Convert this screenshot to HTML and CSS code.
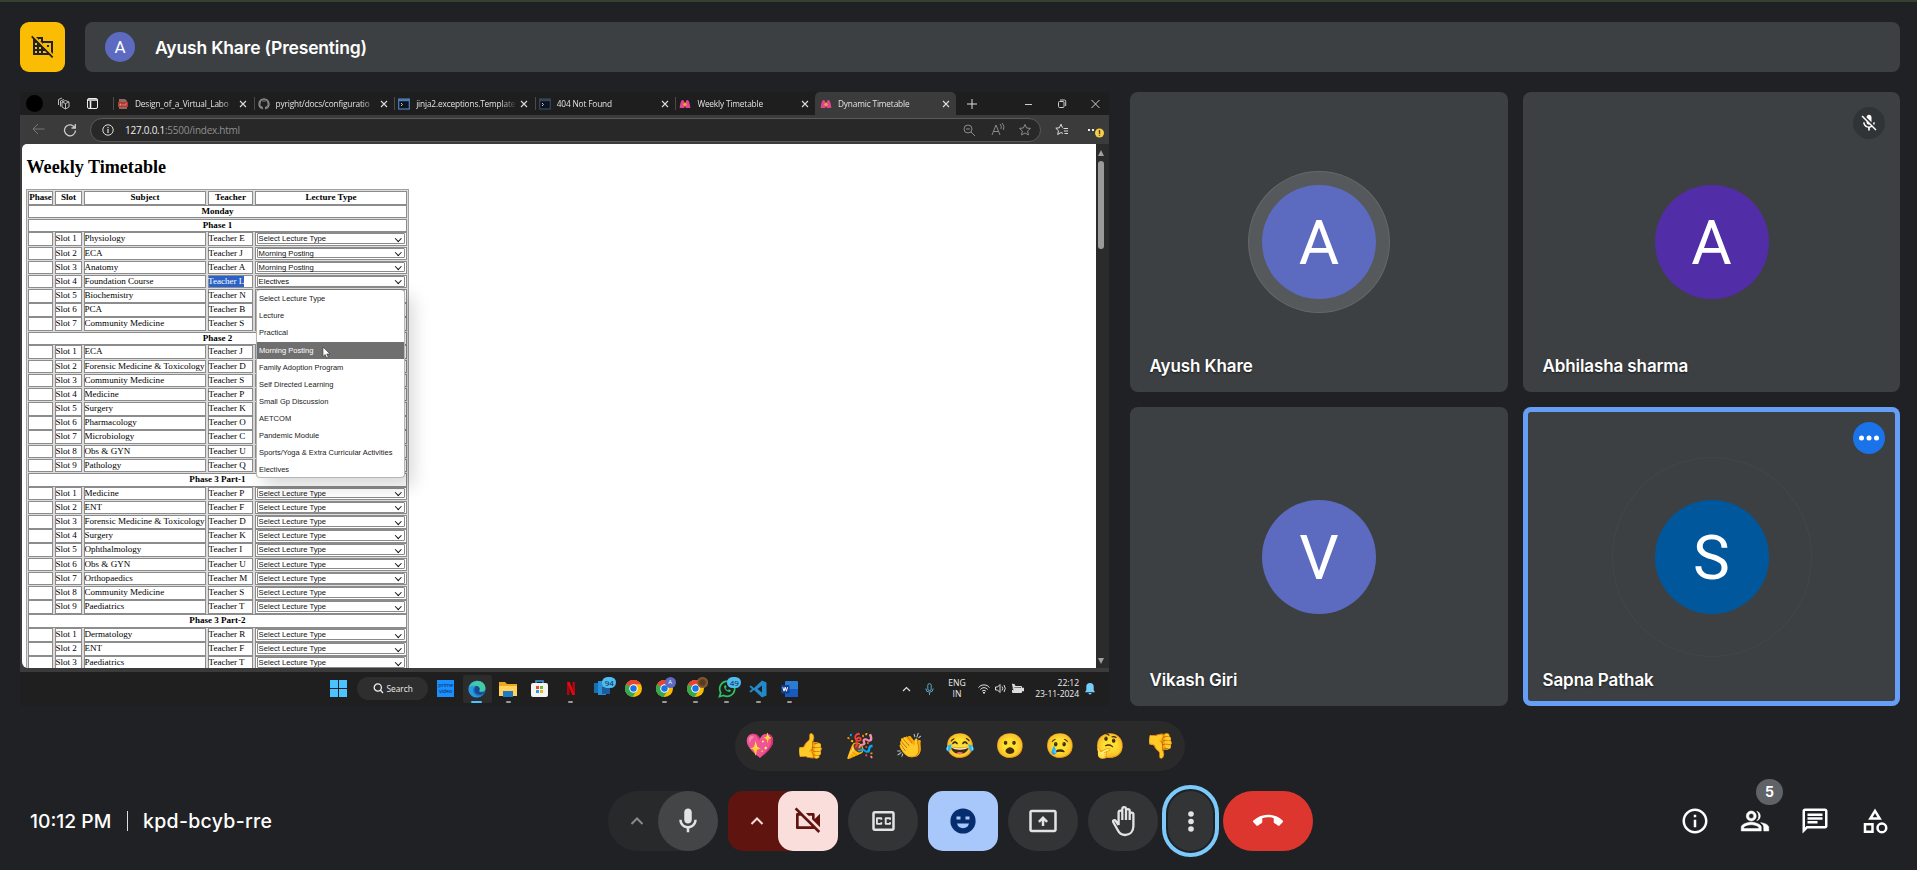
FILE: index.html
```html
<!DOCTYPE html>
<html lang="en">
<head>
<meta charset="utf-8">
<title>Meet - kpd-bcyb-rre</title>
<link rel="stylesheet" href="styles.css">
</head>
<body>
<svg class="defs" width="0" height="0">
  <symbol id="i-chrome" viewBox="0 0 20 20"><circle cx="10" cy="10" r="10" fill="#fbbc04"/><path d="M10 10L1.3 5A10 10 0 0 1 18.7 5H10z" fill="#ea4335"/><path d="M10 10L1.3 5a10 10 0 0 0 7.6 14.9L14 12z" fill="#34a853"/><circle cx="10" cy="10" r="5" fill="#fff"/><circle cx="10" cy="10" r="3.8" fill="#1a73e8"/></symbol>
  <symbol id="i-x" viewBox="0 0 8 8"><path d="M1 1l6 6M7 1L1 7" stroke="#ddd" stroke-width="1.1"/></symbol>
  <symbol id="i-fly" viewBox="0 0 12 10"><path d="M5.300 9H1.200C.3 9 .8 7.500 1 6.500 1.500 4 2 1 3.800 1 5 1 5.300 3 5.500 5zM6.700 9h4.100c.9 0 .4-1.500.2-2.500C10.500 4 10 1 8.200 1 7 1 6.700 3 6.500 5z" fill="#e0468f"/><path d="M6 3L4 5.500 6 8l2-2.500z" fill="#f39a3a"/></symbol>
  <symbol id="i-term" viewBox="0 0 12 12"><rect x=".7" y="1" width="10.600" height="10" fill="#10141c" stroke="currentColor" stroke-width="1.200"/><path d="M.5 2.200h11" stroke="currentColor" stroke-width="2"/><path d="M3 5l1.500 1.500L3 8" stroke="#ccc" fill="none"/></symbol>
  <symbol id="i-up" viewBox="0 0 14 14"><path d="M1.500 10L7 4.500 12.500 10" fill="none" stroke="currentColor" stroke-width="2"/></symbol>
</svg>

<header class="top">
  <button class="domain"><svg width="24" height="24" viewBox="0 0 24 24" fill="#202124"><path fill-rule="evenodd" d="M8 5h2v2h-.9L12 9.900V9h8v8.900l2 2V7H12V3H5.100L8 5.900V5zm8 6h2v2h-2v-2zM1.300 1.800L.1 3.100 2 5v16h16l3 3 1.300-1.300-21-20.900zM4 17h2v2H4v-2zm2-2H4v-2h2v2zM4 9h2v2H4V9zm6 10H8v-2h2v2zm-2-4v-2h2v2H8zm4 4v-2h2l2 2h-4z"/></svg></button>
  <div class="presenter"><span class="mini">A</span><span class="ptext">Ayush Khare (Presenting)</span></div>
</header>

<main class="stage">
  <section class="share">
    <div class="tabs">
      <div class="tabtools">
        <span class="blob"></span>
        <svg width="13" height="13" viewBox="0 0 13 13" fill="none" stroke="#bbb"><path d="M5 5l3.500-1.500L12 5v5l-3.500 2L5 10zM5 5l3.500 1.500L12 5M8.500 6.500V12M3.500 9.500V4L7 2.500M1.500 8V2.500L5 1"/></svg>
        <svg width="11" height="11" viewBox="0 0 11 11" fill="none" stroke="#eee"><rect x=".5" y=".5" width="10" height="10" rx="1.500"/><path d="M.5 2h10M3.500 3v7" stroke-width="1.600"/></svg>
      </div>
      <div class="tab"><svg width="12" height="12" viewBox="0 0 12 12"><path d="M2 1h6l2 2v8H2z" fill="#8d6a66"/><path d="M1 4h10v5H1z" fill="#b3392f"/><path d="M3 7h1V6H3v2M6 6v2M8 8V6h2" stroke="#eaa" stroke-width=".6" fill="none"/></svg><span class="tt">Design_of_a_Virtual_Labo</span><svg class="x"><use href="#i-x"/></svg></div>
      <div class="tab"><svg width="12" height="12" viewBox="0 0 12 12"><path d="M4.500 11.200V9.500C3 9.800 2.500 9 2 8.300M7.500 11.200V9c2-.4 3-1.400 2.400-4L9.500 2 7.600 3H4.400L2.500 2 2.200 5c-.6 2 .3 3.500 2.300 4" fill="none" stroke="#888"/><circle cx="6" cy="6" r="5" fill="none" stroke="#888" stroke-width="1.400" stroke-dasharray="27 4.400" stroke-dashoffset="-10"/></svg><span class="tt">pyright/docs/configuratio</span><svg class="x"><use href="#i-x"/></svg></div>
      <div class="tab"><svg class="term" width="12" height="12"><use href="#i-term"/></svg><span class="tt">jinja2.exceptions.Template</span><svg class="x"><use href="#i-x"/></svg></div>
      <div class="tab"><svg class="term dim" width="12" height="12"><use href="#i-term"/></svg><span class="tt">404 Not Found</span><svg class="x"><use href="#i-x"/></svg></div>
      <div class="tab"><svg width="12" height="10"><use href="#i-fly"/></svg><span class="tt">Weekly Timetable</span><svg class="x"><use href="#i-x"/></svg></div>
      <div class="tab on"><svg width="12" height="10"><use href="#i-fly"/></svg><span class="tt">Dynamic Timetable</span><svg class="x"><use href="#i-x"/></svg></div>
      <svg class="plus" width="10" height="10" viewBox="0 0 10 10" stroke="#ddd"><path d="M5 0v10M0 5h10"/></svg>
      <svg class="win" width="76" height="10" viewBox="0 0 76 10" fill="none" stroke="#ccc"><path d="M1 5.500h7M67.500 1l8 8M75.500 1l-8 8"/><rect x="34.500" y="2.500" width="5.500" height="6" rx="1"/><path d="M36 1h4.500a1.200 1.200 0 0 1 1.200 1.200V7"/></svg>
    </div>
    <div class="bar">
      <svg class="back" width="13" height="12" viewBox="0 0 13 12" fill="none" stroke="#777"><path d="M12.500 6H1M6 1L1 6l5 5"/></svg>
      <svg class="reload" width="14" height="14" viewBox="0 0 14 14" fill="none" stroke="#ccc" stroke-width="1.300"><path d="M12 5A5.500 5.500 0 1 0 12.500 7.500M12.300 1v4H8.500"/></svg>
      <div class="omni">
        <svg width="12" height="12" viewBox="0 0 12 12" fill="none" stroke="#ddd"><circle cx="6" cy="6" r="5.200"/><path d="M6 5v4M6 3v1.200" stroke-width="1.200"/></svg>
        <span class="url"><em>127.0.0.1</em>:5500/index.html</span>
        <svg class="omr" width="70" height="14" viewBox="0 0 70 14" fill="none" stroke="#8a8a8a"><circle cx="6" cy="6" r="4"/><path d="M9 9l4 4M4 6h4M30 12l4-10 4 10M31.500 8.500h5M38 1q2 2 1 5M40 0q3 3 1.500 7M63 1.500l1.600 3.500 3.900.4-2.900 2.600.9 3.900L63 10l-3.500 1.900.9-3.900-2.900-2.600 3.900-.4z"/></svg>
      </div>
      <svg class="fav" width="14" height="13" viewBox="0 0 14 13" fill="none" stroke="#ddd"><path d="M8 10.500L6 9.500l-3.300 2 .8-3.700L.8 5.200l3.500-.4L6 1.200l1.500 3.500M8.500 5.500H13M9 8h4M9.500 10.500H13"/></svg>
      <svg class="dots" width="18" height="14" viewBox="0 0 18 14"><path d="M1 5h2v2H1zM5 5h2v2H5z" fill="#eee"/><circle cx="12.500" cy="9" r="4.500" fill="#f5cf4a"/><path d="M12.500 6v4M12.500 10.800v1" stroke="#5c4500" stroke-width="1.400"/></svg>
    </div>
    <div class="view">
      <div class="page">
        <h1>Weekly Timetable</h1>
        <div class="tbl">
          <div class="r hd"><b>Phase</b><b>Slot</b><b>Subject</b><b>Teacher</b><b>Lecture Type</b></div>
          <div class="r full"><b>Monday</b></div>
          <div class="r full"><b>Phase 1</b></div>
          <div class="r"><i></i><i>Slot 1</i><i>Physiology</i><i>Teacher E</i><i><s>Select Lecture Type</s></i></div>
          <div class="r"><i></i><i>Slot 2</i><i>ECA</i><i>Teacher J</i><i><s>Morning Posting</s></i></div>
          <div class="r"><i></i><i>Slot 3</i><i>Anatomy</i><i>Teacher A</i><i><s>Morning Posting</s></i></div>
          <div class="r"><i></i><i>Slot 4</i><i>Foundation Course</i><i><mark>Teacher L</mark></i><i class="anchor"><s>Electives</s>
            <div class="menu">
              <span>Select Lecture Type</span><span>Lecture</span><span>Practical</span><span class="hot">Morning Posting<svg class="cursor" width="9" height="13" viewBox="0 0 9 13"><path d="M1 1v9.500l2.200-2 1.500 3.500 1.600-.7L4.800 8H8z" fill="#fff" stroke="#333" stroke-width=".6"/></svg></span><span>Family Adoption Program</span><span>Self Directed Learning</span><span>Small Gp Discussion</span><span>AETCOM</span><span>Pandemic Module</span><span>Sports/Yoga &amp; Extra Curricular Activities</span><span>Electives</span>
            </div></i></div>
          <div class="r"><i></i><i>Slot 5</i><i>Biochemistry</i><i>Teacher N</i><i><s></s></i></div>
          <div class="r"><i></i><i>Slot 6</i><i>PCA</i><i>Teacher B</i><i><s></s></i></div>
          <div class="r"><i></i><i>Slot 7</i><i>Community Medicine</i><i>Teacher S</i><i><s></s></i></div>
          <div class="r full"><b>Phase 2</b></div>
          <div class="r"><i></i><i>Slot 1</i><i>ECA</i><i>Teacher J</i><i><s></s></i></div>
          <div class="r"><i></i><i>Slot 2</i><i>Forensic Medicine &amp; Toxicology</i><i>Teacher D</i><i><s></s></i></div>
          <div class="r"><i></i><i>Slot 3</i><i>Community Medicine</i><i>Teacher S</i><i><s></s></i></div>
          <div class="r"><i></i><i>Slot 4</i><i>Medicine</i><i>Teacher P</i><i><s></s></i></div>
          <div class="r"><i></i><i>Slot 5</i><i>Surgery</i><i>Teacher K</i><i><s></s></i></div>
          <div class="r"><i></i><i>Slot 6</i><i>Pharmacology</i><i>Teacher O</i><i><s></s></i></div>
          <div class="r"><i></i><i>Slot 7</i><i>Microbiology</i><i>Teacher C</i><i><s></s></i></div>
          <div class="r"><i></i><i>Slot 8</i><i>Obs &amp; GYN</i><i>Teacher U</i><i><s></s></i></div>
          <div class="r"><i></i><i>Slot 9</i><i>Pathology</i><i>Teacher Q</i><i><s></s></i></div>
          <div class="r full"><b>Phase 3 Part-1</b></div>
          <div class="r"><i></i><i>Slot 1</i><i>Medicine</i><i>Teacher P</i><i><s>Select Lecture Type</s></i></div>
          <div class="r"><i></i><i>Slot 2</i><i>ENT</i><i>Teacher F</i><i><s>Select Lecture Type</s></i></div>
          <div class="r"><i></i><i>Slot 3</i><i>Forensic Medicine &amp; Toxicology</i><i>Teacher D</i><i><s>Select Lecture Type</s></i></div>
          <div class="r"><i></i><i>Slot 4</i><i>Surgery</i><i>Teacher K</i><i><s>Select Lecture Type</s></i></div>
          <div class="r"><i></i><i>Slot 5</i><i>Ophthalmology</i><i>Teacher I</i><i><s>Select Lecture Type</s></i></div>
          <div class="r"><i></i><i>Slot 6</i><i>Obs &amp; GYN</i><i>Teacher U</i><i><s>Select Lecture Type</s></i></div>
          <div class="r"><i></i><i>Slot 7</i><i>Orthopaedics</i><i>Teacher M</i><i><s>Select Lecture Type</s></i></div>
          <div class="r"><i></i><i>Slot 8</i><i>Community Medicine</i><i>Teacher S</i><i><s>Select Lecture Type</s></i></div>
          <div class="r"><i></i><i>Slot 9</i><i>Paediatrics</i><i>Teacher T</i><i><s>Select Lecture Type</s></i></div>
          <div class="r full"><b>Phase 3 Part-2</b></div>
          <div class="r"><i></i><i>Slot 1</i><i>Dermatology</i><i>Teacher R</i><i><s>Select Lecture Type</s></i></div>
          <div class="r"><i></i><i>Slot 2</i><i>ENT</i><i>Teacher F</i><i><s>Select Lecture Type</s></i></div>
          <div class="r"><i></i><i>Slot 3</i><i>Paediatrics</i><i>Teacher T</i><i><s>Select Lecture Type</s></i></div>
        </div>
      </div>
      <div class="scroll"><span class="aup"></span><span class="thumb"></span><span class="adn"></span></div>
    </div>
    <div class="task">
      <div class="apps">
        <svg class="start" width="17" height="17" viewBox="0 0 17 17" fill="#4cc2ff"><path d="M0 0h8v8H0zM9 0h8v8H9zM0 9h8v8H0zM9 9h8v8H9z"/></svg>
        <div class="search"><svg width="11" height="11" viewBox="0 0 11 11" fill="none" stroke="#eee" stroke-width="1.300"><circle cx="4.800" cy="4.500" r="3.600"/><path d="M7.300 7L10 10"/></svg>Search</div>
        <div class="app prime"><span>prime<br>video</span></div>
        <div class="app edge"><svg width="18" height="18" viewBox="0 0 18 18"><circle cx="9" cy="9" r="8.600" fill="#1a7fd0"/><path d="M.8 8C2 2 8 0 12 1.300c4 1.200 6 5 5.300 8-.6 2.400-4 3-6 1.800C13 9 11 6 8 6 5 5.800 2 6.500.8 8z" fill="#41c9a8"/><path d="M.6 9C1 6 5 4.500 8 6c-3 1-4 4-2.500 7s5 4 8 3C8 19.500.5 16 .6 9z" fill="#2b9be0"/><path d="M8 6c3 0 4.500 2.500 3 5-.5 1 2 2 5.500.8-1 2.500-3 3-5 3C8 14.500 6 12 6.500 9 6.700 7.500 7.500 6.500 8 6z" fill="#164a8c"/></svg><u></u></div>
        <div class="app"><svg width="18" height="16" viewBox="0 0 18 16"><path d="M0 1h6l2 2h10v12H0z" fill="#e9a820"/><path d="M0 5h18v10H0z" fill="#ffd35c"/><path d="M4 10h10v6H4z" fill="#1f78c8"/></svg><u></u></div>
        <div class="app"><svg width="17" height="17" viewBox="0 0 17 17"><path d="M5 4V1h7v3" fill="none" stroke="#3aa0e8" stroke-width="1.500"/><rect y="3" width="17" height="14" rx="2" fill="#f4f4f4"/><path d="M5 6h3v3H5z" fill="#e5502b"/><path d="M9 6h3v3H9z" fill="#77b82a"/><path d="M5 10h3v3H5z" fill="#2a9be5"/><path d="M9 10h3v3H9z" fill="#f3b21b"/></svg></div>
        <div class="app"><svg width="8" height="13" viewBox="0 0 8 13"><path d="M0 0h2.500v13H0zM5.500 0H8v13H5.500z" fill="#b1060f"/><path d="M0 0h2.700L8 13H5.300z" fill="#e50914"/></svg><u></u></div>
        <div class="app"><svg width="18" height="16" viewBox="0 0 18 16"><path d="M1 2h12v10H1z" fill="#1272b8"/><path d="M5 0h8v14H5z" fill="#2a8fd8"/><path d="M9 6h8v7H9z" fill="#195f9e"/></svg><span class="bdg">94</span></div>
        <div class="app"><svg width="17" height="17"><use href="#i-chrome"/></svg></div>
        <div class="app"><svg width="17" height="17"><use href="#i-chrome"/></svg><span class="bdg av">A</span><u></u></div>
        <div class="app"><svg width="17" height="17"><use href="#i-chrome"/></svg><span class="bdg face"></span><u></u></div>
        <div class="app"><svg width="18" height="18" viewBox="0 0 18 18" fill="none" stroke="#2fbf60" stroke-width="1.700"><path d="M1.500 16.500l1.200-4a7.500 7.500 0 1 1 3 2.900z"/><path d="M6 6c0 3 3 6 6 6l1-1.500-2-1.200-1 1C9 10 8 9 7.700 8l1-1L7.500 5z" fill="#2fbf60" stroke="none"/></svg><span class="bdg">49</span><u></u></div>
        <div class="app"><svg width="18" height="18" viewBox="0 0 18 18"><path d="M13 .5l4.500 2v13l-4.500 2L5 10l-3.200 2.600L.3 11.500 3 9 .3 6.500l1.500-1.100L5 8zM13 5.500L8.500 9l4.500 3.500z" fill="#2489ca" fill-rule="evenodd"/></svg><u></u></div>
        <div class="app"><svg width="17" height="16" viewBox="0 0 17 16"><rect x="4" width="13" height="16" rx="1" fill="#2b7cd3"/><path d="M4 8h13v7a1 1 0 0 1-1 1H4z" fill="#185abd"/><rect y="4" width="8.500" height="8.500" rx="1" fill="#103f91"/><path d="M1.800 6.200l1.200 4 1.200-4 1.200 4 1.200-4" fill="none" stroke="#fff"/></svg><u></u></div>
      </div>
      <div class="tray">
        <svg width="9" height="6" viewBox="0 0 9 6" fill="none" stroke="#ddd" stroke-width="1.200"><path d="M1 5l3.500-3.500L8 5"/></svg>
        <svg class="tmic" width="9" height="12" viewBox="0 0 9 12" fill="none" stroke="#5fa8c8"><rect x="2.800" y=".6" width="3.400" height="7" rx="1.700"/><path d="M.8 5.500a3.700 3.700 0 0 0 7.400 0M4.500 9.500V12"/></svg>
        <div class="lang">ENG<br>IN</div>
        <svg class="sys" width="46" height="11" viewBox="0 0 46 11" fill="none" stroke="#ddd"><path d="M.5 4.500a7 7 0 0 1 11 0M2.300 6.500a4.600 4.600 0 0 1 7.400 0M4 8.300a2.600 2.600 0 0 1 4 0"/><path d="M5 9h2v1.500H5z" fill="#ddd" stroke="none"/><path d="M17.500 4h2l2.500-2.500v8L19.500 7h-2zM24 3.500q1.500 2 0 4M26 2q2.500 3.500 0 7"/><path d="M36 3.500h7.500v6H34.500V7" /><path d="M36 5h6.500v4h-7zM44.500 5h1v3h-1zM34 1l3 1-2 4" fill="#ddd"/></svg>
        <div class="clock">22:12<br>23-11-2024</div>
        <svg class="bell" width="10" height="12" viewBox="0 0 10 12" fill="#76cdf5"><path d="M5 0a3.700 3.700 0 0 1 3.700 3.800V7L10 9.300H0L1.300 7V3.800A3.700 3.700 0 0 1 5 0zM3.500 10h3a1.500 1.500 0 0 1-3 0z"/></svg>
      </div>
    </div>
  </section>

  <section class="tiles">
    <div class="tile"><div class="ava indigo talk">A</div><span class="name">Ayush Khare</span></div>
    <div class="tile"><div class="ava purple">A</div><span class="name">Abhilasha sharma</span><span class="corner"><svg width="20" height="20" viewBox="0 0 24 24" fill="#fff"><path d="M19 11h-1.700c0 .74-.16 1.430-.43 2.050l1.230 1.230c.56-.98.9-2.090.9-3.280zm-4.020.17c0-.06.02-.11.02-.17V5c0-1.660-1.340-3-3-3S9 3.340 9 5v.18l5.980 5.990zM4.270 3L3 4.270l6.010 6.010V11c0 1.660 1.330 3 2.990 3 .22 0 .44-.03.65-.08l1.660 1.660c-.71.33-1.500.52-2.310.52-2.760 0-5.300-2.100-5.300-5.100H5c0 3.410 2.720 6.230 6 6.720V21h2v-3.280c.91-.13 1.770-.45 2.540-.9L19.730 21 21 19.730 4.270 3z"/></svg></span></div>
    <div class="tile"><div class="ava indigo">V</div><span class="name">Vikash Giri</span></div>
    <div class="tile active"><div class="ava blue halo">S</div><span class="name">Sapna Pathak</span><span class="corner act"><svg width="20" height="6" viewBox="0 0 20 6" fill="#fff"><circle cx="2.500" cy="3" r="2.500"/><circle cx="10" cy="3" r="2.500"/><circle cx="17.500" cy="3" r="2.500"/></svg></span></div>
  </section>
</main>

<div class="react"><span>💖</span><span>👍</span><span>🎉</span><span>👏</span><span>😂</span><span>😮</span><span>😢</span><span>🤔</span><span>👎</span></div>

<footer class="foot">
  <div class="meta"><span class="time">10:12 PM</span><span class="sep"></span><span class="code">kpd-bcyb-rre</span></div>
  <div class="ctl">
    <div class="grp mic"><svg class="chev" width="14" height="14"><use href="#i-up"/></svg><button><svg width="30" height="30" viewBox="0 0 24 24" fill="#e3e3e3"><path d="M12 14c1.660 0 3-1.340 3-3V5c0-1.660-1.340-3-3-3S9 3.340 9 5v6c0 1.660 1.340 3 3 3zM17 11c0 2.760-2.240 5-5 5s-5-2.240-5-5H5c0 3.530 2.610 6.430 6 6.920V21h2v-3.080c3.390-.49 6-3.390 6-6.920h-2z"/></svg></button></div>
    <div class="grp cam"><svg class="chev" width="14" height="14"><use href="#i-up"/></svg><button><svg width="32" height="32" viewBox="0 0 24 24" fill="#601410"><path d="M9.560 8l-2-2-4.150-4.140L2 3.270 4.730 6H4c-.55 0-1 .45-1 1v10c0 .55.45 1 1 1h12c.21 0 .39-.08.55-.18L19.730 21l1.410-1.410-8.860-8.860L9.560 8zM5 16V8h1.730l8 8H5zm10-8v2.610l6 6V6.500l-4 4V7c0-.55-.45-1-1-1h-5.610l2 2H15z"/></svg></button></div>
    <button class="c"><svg width="31" height="30" viewBox="0 0 24 24" fill="#e3e3e3"><path d="M19 4H5c-1.110 0-2 .9-2 2v12c0 1.100.89 2 2 2h14c1.100 0 2-.9 2-2V6c0-1.100-.9-2-2-2zm0 14H5V6h14v12zM7 15h3c.55 0 1-.45 1-1v-1H9.500v.5h-2v-3h2v.5H11v-1c0-.55-.45-1-1-1H7c-.55 0-1 .45-1 1v4c0 .55.45 1 1 1zm7 0h3c.55 0 1-.45 1-1v-1h-1.500v.5h-2v-3h2v.5H18v-1c0-.55-.45-1-1-1h-3c-.55 0-1 .45-1 1v4c0 .55.45 1 1 1z"/></svg></button>
    <button class="c smile"><svg width="26" height="26" viewBox="0 0 26 26"><circle cx="13" cy="13" r="12.600" fill="#062e6f"/><path d="M6.500 8.500h4v3h-4zM15.500 8.500h4v3h-4zM7 15.500h12a6.200 6.200 0 0 1-12 0z" fill="#a8c7fa"/></svg></button>
    <button class="c"><svg width="30" height="30" viewBox="0 0 24 24" fill="#e3e3e3"><path d="M21 3H3c-1.110 0-2 .89-2 2v14c0 1.110.89 2 2 2h18c1.110 0 2-.89 2-2V5c0-1.110-.89-2-2-2zm0 16.020H3V4.980h18v14.040zM11 16v-4.200l-1.600 1.600L8 12l4-4 4 4-1.400 1.400-1.600-1.600V16z"/></svg></button>
    <button class="c"><svg width="25" height="31" viewBox="0 0 25 31" fill="none" stroke="#e3e3e3" stroke-width="2.300" stroke-linejoin="round"><path d="M7.600 19V6.500a1.850 1.850 0 0 1 3.700 0V14M11.300 14V3a1.850 1.850 0 0 1 3.700 0v11M15 14V5a1.850 1.850 0 0 1 3.700 0v9M18.700 14V8.500a1.850 1.850 0 0 1 3.700 0V20c0 5.500-3.400 9-8.200 9-3.700 0-6-1.800-7.500-5L2.300 16.300c-.8-1.900 1.400-2.800 2.500-1.300L7.600 19"/></svg></button>
    <button class="more"><svg width="6" height="21" viewBox="0 0 6 21" fill="#e3e3e3"><circle cx="3" cy="3" r="2.800"/><circle cx="3" cy="10.500" r="2.800"/><circle cx="3" cy="18" r="2.800"/></svg></button>
    <button class="end"><svg width="30" height="30" viewBox="0 0 24 24" fill="#fff"><path d="M12 9c-1.600 0-3.150.25-4.600.72v3.100c0 .39-.23.74-.56.9-.98.490-1.870 1.120-2.660 1.850-.18.180-.43.280-.7.280-.28 0-.53-.11-.71-.29L.29 13.080c-.18-.17-.29-.42-.29-.7 0-.28.110-.53.290-.71C3.340 8.780 7.460 7 12 7s8.660 1.780 11.710 4.670c.18.180.290.430.290.710 0 .28-.11.530-.29.710l-2.480 2.480c-.18.180-.43.290-.71.290-.27 0-.52-.11-.7-.28-.79-.74-1.690-1.360-2.670-1.850-.33-.16-.56-.5-.56-.9v-3.100C15.150 9.250 13.600 9 12 9z"/></svg></button>
  </div>
  <div class="side">
    <svg width="30" height="30" viewBox="0 0 24 24" fill="#fff"><path d="M11 7h2v2h-2V7zm0 4h2v6h-2v-6zm1-9C6.480 2 2 6.480 2 12s4.480 10 10 10 10-4.480 10-10S17.520 2 12 2zm0 18c-4.410 0-8-3.590-8-8s3.590-8 8-8 8 3.590 8 8-3.590 8-8 8z"/></svg>
    <span class="people"><svg width="30" height="30" viewBox="0 0 24 24" fill="#fff"><path d="M9 4a4 4 0 1 0 0 8 4 4 0 0 0 0-8zm0 6a2 2 0 1 1 0-4 2 2 0 0 1 0 4zm0 3c-2.670 0-8 1.340-8 4v3h16v-3c0-2.660-5.330-4-8-4zm6 5H3v-.99C3.200 16.290 6.300 15 9 15s5.800 1.290 6 2v1zM13.500 11.800a4 4 0 0 0 0-7.600A5.500 5.500 0 0 1 13.500 11.800zM16.500 13.300c1.500.9 2.500 2.200 2.500 3.700v3h4v-3c0-2-3.300-3.300-6.500-3.700z" stroke="#fff" stroke-width=".4"/></svg><b>5</b></span>
    <svg width="30" height="30" viewBox="0 0 24 24" fill="#fff"><path d="M4 4h16v12H5.170L4 17.170V4m0-2c-1.100 0-1.990.9-1.990 2L2 22l4-4h14c1.100 0 2-.9 2-2V4c0-1.100-.9-2-2-2H4zm2 10h8v2H6v-2zm0-3h12v2H6V9zm0-3h12v2H6V6z"/></svg>
    <svg width="30" height="30" viewBox="0 0 24 24" fill="#fff"><path fill-rule="evenodd" d="M12 2L6.500 11h11zm0 3.800L13.900 9h-3.800zM17.500 13a4.500 4.500 0 1 0 0 9 4.500 4.500 0 0 0 0-9zm0 7a2.500 2.500 0 1 1 0-5 2.500 2.500 0 0 1 0 5zM3 21.500h8v-8H3zm2-6h4v4H5z"/></svg>
  </div>
</footer>
</body>
</html>
```
FILE: styles.css
```css
* { box-sizing: border-box; }
body { margin: 0; width: 1917px; height: 870px; overflow: hidden; background: #202124; border-top: 2px solid #364031; font-family: Inter, "Open Sans", sans-serif; color: #fff; display: flex; flex-direction: column; }
.defs { position: absolute; }
svg { display: block; flex: none; }
button { border: 0; padding: 0; display: flex; align-items: center; justify-content: center; }

.top { display: flex; gap: 20px; padding: 20px 17px 0 20px; height: 90px; flex: none; }
.domain { width: 45px; height: 50px; border-radius: 9px; background: #fbbc04; }
.domain svg { margin-top: -3px; }
.presenter { flex: 1; height: 50px; border-radius: 8px; background: #3c4043; display: flex; align-items: center; padding-left: 20px; }
.mini { width: 30px; height: 30px; border-radius: 50%; background: #5c6bc0; font: 17px/31px Roboto, sans-serif; text-align: center; }
.ptext { margin-left: 20px; font-size: 17.500px; font-weight: 600; letter-spacing: -.18px; white-space: nowrap; }

.stage { display: flex; padding: 0 17px 0 20px; height: 615px; flex: none; justify-content: space-between; }
.share { width: 1089px; height: 614px; background: #1f1f1f; font-family: "Open Sans", "Noto Sans", sans-serif; }
.tabs { height: 23px; display: flex; align-items: center; background: #1e1e1e; }
.tabtools { width: 92px; display: flex; align-items: center; padding-left: 6px; }
.blob { width: 17px; height: 17px; border-radius: 50%; background: #000; margin-right: 14px; }
.tabtools svg + svg { margin-left: 17px; }
.tab { width: 140.600px; height: 23px; display: flex; align-items: center; padding-left: 4px; position: relative; border-left: 1px solid transparent; }
.tab::before { content: ""; position: absolute; left: 0; top: 5px; width: 1px; height: 13px; background: #4a4a4a; }
.tab.on::before { display: none; }
.tab.on { background: #3b3b3b; border-radius: 5px 5px 0 0; }
.tt { margin-left: 6px; width: 99px; font-size: 8.300px; letter-spacing: -.16px; color: #e2e2e2; white-space: nowrap; overflow: hidden; mask-image: linear-gradient(90deg, #000 86%, rgba(0,0,0,.15)); }
.x { width: 8px; height: 8px; margin-left: 5px; }
.term { color: #4f7fbe; }
.term.dim { color: #34485e; }
.plus { margin-left: 11px; }
.win { margin-left: 47px; }
.bar { height: 29px; background: #3b3b3b; display: flex; align-items: center; padding-left: 12px; }
.back { margin-bottom: 1px; }
.reload { margin-left: 18px; }
.omni { margin-left: 13px; width: 951px; height: 24px; border-radius: 12px; background: #282828; border: 1px solid #5a5a5a; display: flex; align-items: center; padding: 0 8px 0 11px; }
.url { margin-left: 11px; font-size: 10px; color: #8f8f8f; letter-spacing: -.25px; }
.url em { font-style: normal; color: #eee; }
.omr { margin-left: auto; }
.fav { margin-left: 14px; }
.dots { margin-left: 18px; margin-top: 2px; }
.view { height: 528px; background: #3b3b3b; padding: 0 0 4px 2px; display: flex; }
.page { width: 1074px; background: #fff; border-radius: 5px 0 0 6px; color: #000; overflow: hidden; padding: 0 0 0 4px; font-family: "Liberation Serif", serif; }
.page h1 { margin: 12px 0 11px .5px; font-size: 18.100px; line-height: 22px; font-weight: bold; }
.scroll { width: 13px; background: #2b2b2b; display: flex; flex-direction: column; align-items: center; padding: 6px 3px 4px 0; }
.aup { border: 3.500px solid transparent; border-top: 0; border-bottom: 6px solid #a0a0a0; }
.thumb { width: 6px; height: 88px; border-radius: 3px; background: #9a9a9a; margin-top: 5px; }
.adn { border: 3.500px solid transparent; border-bottom: 0; border-top: 6px solid #a0a0a0; margin-top: auto; }

.tbl { width: 383px; border: 1px solid #a0a0a0; border-bottom: 0; background: #dcdcdc; padding: 1.300px 1px 0; font-size: 9.050px; }
.r { display: grid; grid-template-columns: 25px 27px 122px 45px 152px; column-gap: 2px; height: 14.200px; padding-bottom: 1.500px; }
.r > * { font-style: normal; background: #fff; border: 1px solid #8c8c8c; line-height: 11.500px; min-width: 0; white-space: nowrap; }
.r i { padding-left: 0; text-indent: -.5px; }
.hd, .full { height: 13.700px; }
.r b { text-align: center; }
.full { grid-template-columns: 1fr; }
.r i:last-child { padding: 0 1px; text-indent: 0; }
.r s { display: block; text-decoration: none; border: 1px solid #8a8a8a; border-radius: 1px; height: 10.700px; font: 7.650px/10px "Liberation Sans", sans-serif; padding-left: .6px; color: #111; position: relative; }
.r s::after { content: ""; position: absolute; right: 4px; top: 1.500px; width: 3.500px; height: 3.500px; border: solid #111; border-width: 0 1.300px 1.300px 0; transform: rotate(45deg); }
mark { background: #2a62c8; color: #fff; display: inline-block; height: 11px; }
.anchor { position: relative; }
.menu { position: absolute; z-index: 2; left: 0; top: 13px; width: 149px; height: 189px; padding-top: .5px; background: #fff; border: 1px solid #b5b5b5; border-top-color: #777; border-radius: 4px; box-shadow: 8px 8px 18px rgba(0,0,0,.16); font: 7.520px/17.040px "Liberation Sans", sans-serif; }
.menu span { display: block; height: 17.040px; padding-left: 2px; color: #222; }
.menu .hot { background: #6f6f6f; color: #fff; position: relative; }
.cursor { position: absolute; left: 65px; top: 4px; }

.task { height: 34px; display: flex; justify-content: space-between; background: #1f1f1f; padding: 0 14px 0 310px; }
.apps { display: flex; align-items: center; height: 33px; }
.search { margin: 0 3px 0 9.500px; width: 71px; height: 23px; border-radius: 12px; background: #2e2e2e; display: flex; align-items: center; font-size: 8.300px; gap: 3px; padding-left: 16px; color: #eee; }
.app { width: 31.250px; height: 28px; display: flex; align-items: center; justify-content: center; position: relative; left: -.5px; }
.app u { position: absolute; bottom: 0; left: 13px; width: 5px; height: 2px; border-radius: 1px; background: #999; }
.prime span { width: 17px; height: 17px; background: #1a8fff; color: #0b2a55; font-size: 5.500px; letter-spacing: -.1px; line-height: 6px; text-align: center; padding-top: 2px; }
.edge { background: #2c2c2c; background-clip: content-box; padding: 0 1.500px; border-radius: 3px; }
.edge u { left: 10px; width: 11px; background: #4cc2ff; }
.bdg { position: absolute; left: 16px; top: 2px; width: 14px; height: 11px; border-radius: 6px; background: #4cbcf2; color: #10222e; font-size: 8px; line-height: 11px; text-align: center; }
.av { background: #5c6bc0; color: #fff; width: 11px; font-size: 6px; left: 16px; }
.face { background: radial-gradient(#5a3b20 30%, #b98543); width: 11px; left: 17px; }
.tray { display: flex; align-items: center; height: 33px; color: #eee; font-size: 8.600px; line-height: 11px; }
.tmic { margin-left: 14px; }
.lang { width: 30px; margin-left: 8px; text-align: center; }
.sys { margin-left: 6px; }
.clock { width: 55px; text-align: right; letter-spacing: -.1px; }
.bell { margin-left: 6px; }

.tiles { display: grid; grid-template-columns: 378px 377px; grid-template-rows: 300px 299px; gap: 15px; }
.tile { background: #3c4043; border-radius: 8px; position: relative; display: flex; align-items: center; justify-content: center; }
.active { box-shadow: inset 0 0 0 5px #669df6; }
.ava { width: 114px; height: 114px; border-radius: 50%; font: 62px/115px Roboto, sans-serif; text-align: center; }
.indigo { background: #5c6bc0; }
.purple { background: #512da8; }
.blue { background: #01579b; }
.talk { box-shadow: 0 0 0 13px #56595b, 0 0 0 14px #65686a; }
.halo { box-shadow: 0 0 0 42px #3c4043, 0 0 0 43px #434649; }
.name { position: absolute; left: 19.500px; bottom: 14px; font-size: 17px; font-weight: 600; letter-spacing: -.1px; line-height: 24px; text-shadow: 0 1px 2px rgba(0,0,0,.6); white-space: nowrap; }
.corner { position: absolute; right: 15px; top: 15px; width: 32px; height: 32px; border-radius: 50%; background: #313437; display: flex; align-items: center; justify-content: center; }
.act { background: #1a73e8; }

.react { align-self: center; margin: 14px 0 0 3px; width: 450px; height: 50px; border-radius: 25px; background: #2a2a2a; display: flex; justify-content: center; flex: none; }
.react span { width: 50px; text-align: center; font-size: 24px; line-height: 50px; font-family: "Noto Color Emoji", sans-serif; }

.foot { display: flex; height: 60px; margin-top: 20px; padding: 0 25px 0 30px; align-items: center; flex: none; }
.meta { display: flex; align-items: center; width: 578px; font-size: 19.500px; font-weight: 500; white-space: nowrap; }
.time { width: 97px; font-size: 19.300px; }
.sep { width: 1px; height: 20px; background: #ddd; }
.code { margin-left: 15px; letter-spacing: .3px; }
.ctl { display: flex; gap: 10px; align-items: center; width: 1057px; }
.grp { width: 110px; height: 60px; display: flex; align-items: center; justify-content: space-between; }
.grp button { width: 60px; height: 60px; }
.grp .chev { margin-left: 22px; }
.mic { background: #28292a; border-radius: 30px; color: #8a8a8a; }
.mic button { border-radius: 30px; background: #444547; }
.cam { background: #601410; border-radius: 15px; color: #f9dedc; }
.cam button { border-radius: 15px; background: #f9dedc; }
.c { width: 70px; height: 60px; border-radius: 30px; background: #333435; }
.smile { background: #a8c7fa; border-radius: 15px; }
.more { width: 45px; height: 60px; border-radius: 23px; background: #333435; outline: 4px solid #7cc9fb; outline-offset: 2.500px; }
.end { width: 90px; height: 60px; border-radius: 30px; background: #dc362e; }
.side { display: flex; gap: 30px; margin-left: 15px; }
.people { position: relative; }
.people b { position: absolute; left: 16px; top: -27px; width: 27px; height: 26px; border-radius: 13px; background: #5f6368; font-size: 14px; line-height: 26px; text-align: center; }
```
